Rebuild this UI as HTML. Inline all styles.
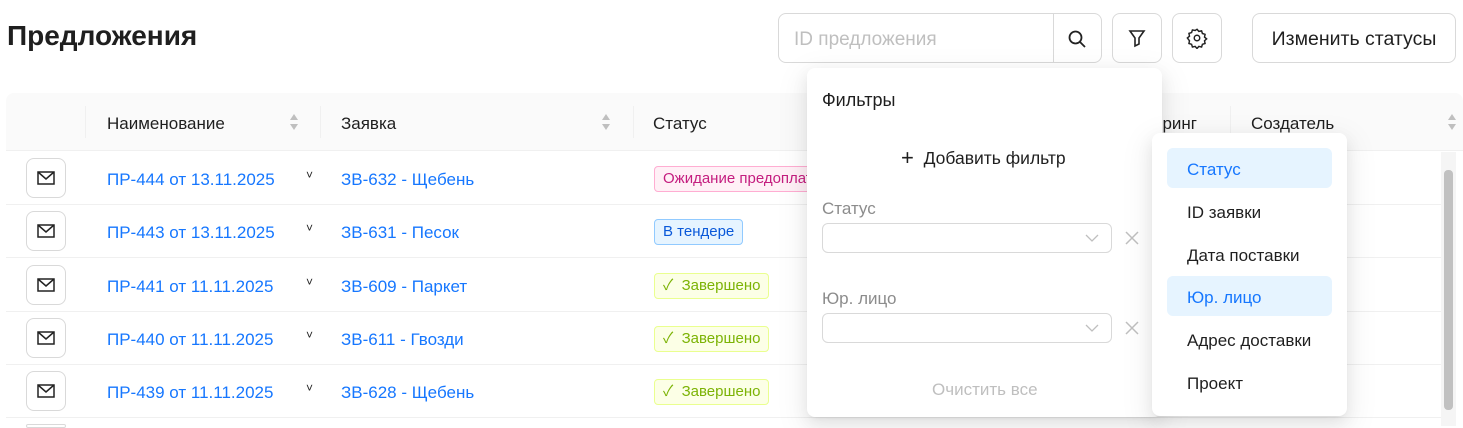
<!DOCTYPE html>
<html><head><meta charset="utf-8"><style>
*{box-sizing:border-box;margin:0;padding:0}
body{width:1463px;height:426px;overflow:hidden;background:#fff;font-family:"Liberation Sans","Noto Sans CJK SC",sans-serif;color:rgba(0,0,0,.88);position:relative;font-size:17px}
.abs{position:absolute}
h1{position:absolute;left:7px;top:20px;font-size:28px;font-weight:bold;color:#1f1f1f}
.btn{position:absolute;border:1px solid #d9d9d9;border-radius:8px;background:#fff;display:flex;align-items:center;justify-content:center}
.thead{position:absolute;left:6px;top:93px;width:1457px;height:58px;background:#fafafa;border-radius:8px 8px 0 0;border-bottom:1px solid #f0f0f0}
.th{position:absolute;top:21px;font-size:17px}
.sep{position:absolute;top:13px;width:1px;height:32px;background:#f0f0f0}
.row{position:absolute;left:6px;width:1435px;height:53px;border-bottom:1px solid #f0f0f0}
.mail{position:absolute;left:20px;top:6px;width:40px;height:40px;border:1px solid #d9d9d9;border-radius:8px;display:flex;align-items:center;justify-content:center}
.link{position:absolute;top:18px;color:#1677ff;font-size:17px}
.tag{position:absolute;left:648px;top:14px;height:26px;border-radius:4px;font-size:15px;padding:0 8px;line-height:24px;border:1px solid}
.t-pink{background:#fff0f6;border-color:#ffadd2;color:#c41d7f}
.t-blue{background:#e6f4ff;border-color:#91caff;color:#0958d9}
.t-green{background:#fcffe6;border-color:#eaff8f;color:#7cb305}
.panel{position:absolute;background:#fff;border-radius:8px;box-shadow:0 6px 16px rgba(0,0,0,.08),0 3px 6px -4px rgba(0,0,0,.12),0 9px 28px 8px rgba(0,0,0,.05)}
.sel{position:absolute;left:15px;width:290px;height:30px;border:1px solid #d9d9d9;border-radius:6px}
.opt{position:absolute;left:15px;width:165px;height:40px;border-radius:6px;padding-left:20px;line-height:44px;font-size:17px}
</style></head><body>
<h1>Предложения</h1>
<div class="btn" style="left:778px;top:13px;width:324px;height:50px;justify-content:flex-start;padding:3px 0 0 15px;color:#bfbfbf;font-size:19px">ID предложения
<div class="abs" style="left:274px;top:0;width:1px;height:48px;background:#d9d9d9"></div>
<svg class="abs" style="left:288px;top:15px" width="20" height="20" viewBox="0 0 20 20" fill="none" stroke="#222" stroke-width="1.8"><circle cx="8.5" cy="8.5" r="6"/><path d="M13 13l5 5"/></svg></div>
<div class="btn" style="left:1112px;top:13px;width:50px;height:50px"><svg width="20" height="20" viewBox="0 0 20 20" fill="none" stroke="#222" stroke-width="1.6"><path d="M3 3h14l-5 7v6l-4 2v-8z"/></svg></div>
<div class="btn" style="left:1172px;top:13px;width:50px;height:50px"><svg width="22" height="22" viewBox="0 0 24 24" fill="none" stroke="#222" stroke-width="1.6"><circle cx="12" cy="12" r="3"/><path d="M12 2.5l2 2.3 3-.6.9 2.9 2.9.9-.6 3 2.3 2-2.3 2 .6 3-2.9.9-.9 2.9-3-.6-2 2.3-2-2.3-3 .6-.9-2.9-2.9-.9.6-3L1.5 12l2.3-2-.6-3 2.9-.9.9-2.9 3 .6z"/></svg></div>
<div class="btn" style="left:1252px;top:13px;width:204px;height:50px;font-size:19.5px;padding-top:3px">Изменить статусы</div>

<div class="thead">
<div class="sep" style="left:79px"></div><div class="th" style="left:101px">Наименование</div>
<svg class="abs" style="left:282px;top:19px" width="12" height="20" viewBox="0 0 12 20" fill="#bfbfbf"><path d="M6 2l4 6H2zM6 18l4-6H2z"/></svg>
<div class="sep" style="left:314px"></div><div class="th" style="left:335px">Заявка</div>
<svg class="abs" style="left:594px;top:19px" width="12" height="20" viewBox="0 0 12 20" fill="#bfbfbf"><path d="M6 2l4 6H2zM6 18l4-6H2z"/></svg>
<div class="sep" style="left:627px"></div><div class="th" style="left:647px">Статус</div>
<div class="th" style="left:1147px">оринг</div>
<div class="sep" style="left:1224px"></div><div class="th" style="left:1245px">Создатель</div>
<svg class="abs" style="left:1440px;top:19px" width="12" height="20" viewBox="0 0 12 20" fill="#bfbfbf"><path d="M6 2l4 6H2zM6 18l4-6H2z"/></svg>
</div>

<div class="row" style="top:152px"><div class="mail"><svg width="18" height="14" viewBox="0 0 18 14" fill="none" stroke="#222" stroke-width="1.5"><rect x="1" y="1" width="16" height="12"/><path d="M1 1l8 7 8-7"/></svg></div><div class="link" style="left:101px">ПР-444 от 13.11.2025</div><div class="abs" style="left:300px;top:16px;font-size:12px">˅</div><div class="link" style="left:335px">ЗВ-632 - Щебень</div><div class="tag t-pink">Ожидание предоплаты</div></div>
<div class="row" style="top:205px"><div class="mail"><svg width="18" height="14" viewBox="0 0 18 14" fill="none" stroke="#222" stroke-width="1.5"><rect x="1" y="1" width="16" height="12"/><path d="M1 1l8 7 8-7"/></svg></div><div class="link" style="left:101px">ПР-443 от 13.11.2025</div><div class="abs" style="left:300px;top:16px;font-size:12px">˅</div><div class="link" style="left:335px">ЗВ-631 - Песок</div><div class="tag t-blue">В тендере</div></div>
<div class="row" style="top:259px"><div class="mail"><svg width="18" height="14" viewBox="0 0 18 14" fill="none" stroke="#222" stroke-width="1.5"><rect x="1" y="1" width="16" height="12"/><path d="M1 1l8 7 8-7"/></svg></div><div class="link" style="left:101px">ПР-441 от 11.11.2025</div><div class="abs" style="left:300px;top:16px;font-size:12px">˅</div><div class="link" style="left:335px">ЗВ-609 - Паркет</div><div class="tag t-green">✓&nbsp; Завершено</div></div>
<div class="row" style="top:312px"><div class="mail"><svg width="18" height="14" viewBox="0 0 18 14" fill="none" stroke="#222" stroke-width="1.5"><rect x="1" y="1" width="16" height="12"/><path d="M1 1l8 7 8-7"/></svg></div><div class="link" style="left:101px">ПР-440 от 11.11.2025</div><div class="abs" style="left:300px;top:16px;font-size:12px">˅</div><div class="link" style="left:335px">ЗВ-611 - Гвозди</div><div class="tag t-green">✓&nbsp; Завершено</div></div>
<div class="row" style="top:365px"><div class="mail"><svg width="18" height="14" viewBox="0 0 18 14" fill="none" stroke="#222" stroke-width="1.5"><rect x="1" y="1" width="16" height="12"/><path d="M1 1l8 7 8-7"/></svg></div><div class="link" style="left:101px">ПР-439 от 11.11.2025</div><div class="abs" style="left:300px;top:16px;font-size:12px">˅</div><div class="link" style="left:335px">ЗВ-628 - Щебень</div><div class="tag t-green">✓&nbsp; Завершено</div></div>
<div class="abs" style="left:26px;top:424px;width:40px;height:4px;border:1px solid #d9d9d9;border-radius:6px"></div>

<div class="abs" style="left:1441px;top:152px;width:15px;height:274px;background:#f5f5f5"></div>
<div class="abs" style="left:1444px;top:170px;width:9px;height:240px;background:#c1c1c1;border-radius:4px"></div>

<div class="panel" style="left:807px;top:68px;width:355px;height:349px">
<div class="abs" style="left:15px;top:22px;font-size:18px">Фильтры</div>
<div class="abs" style="left:94px;top:76px;font-size:17.5px"><span style="font-size:22px;position:relative;top:1px">+</span>&nbsp; Добавить фильтр</div>
<div class="abs" style="left:15px;top:131px;color:#8c8c8c;font-size:17px">Статус</div>
<div class="sel" style="top:155px"><svg class="abs" style="left:262px;top:10px" width="14" height="9" viewBox="0 0 14 9" fill="none" stroke="#bfbfbf" stroke-width="1.3"><path d="M1 1l6 6 6-6"/></svg></div>
<svg class="abs" style="left:318px;top:163px" width="14" height="14" viewBox="0 0 14 14" stroke="#bfbfbf" stroke-width="1.5"><path d="M1 1l12 12M13 1L1 13"/></svg>
<div class="abs" style="left:15px;top:221px;color:#8c8c8c;font-size:17px">Юр. лицо</div>
<div class="sel" style="top:245px"><svg class="abs" style="left:262px;top:10px" width="14" height="9" viewBox="0 0 14 9" fill="none" stroke="#bfbfbf" stroke-width="1.3"><path d="M1 1l6 6 6-6"/></svg></div>
<svg class="abs" style="left:318px;top:253px" width="14" height="14" viewBox="0 0 14 14" stroke="#bfbfbf" stroke-width="1.5"><path d="M1 1l12 12M13 1L1 13"/></svg>
<div class="abs" style="left:125px;top:312px;color:#bfbfbf;font-size:17px">Очистить все</div>
</div>

<div class="panel" style="left:1152px;top:133px;width:195px;height:283px">
<div class="opt" style="top:15px;background:#e6f4ff;color:#1677ff">Статус</div>
<div class="opt" style="top:58px">ID заявки</div>
<div class="opt" style="top:101px">Дата поставки</div>
<div class="opt" style="top:143px;background:#e6f4ff;color:#1677ff">Юр. лицо</div>
<div class="opt" style="top:186px">Адрес доставки</div>
<div class="opt" style="top:229px">Проект</div>
</div>
</body></html>
